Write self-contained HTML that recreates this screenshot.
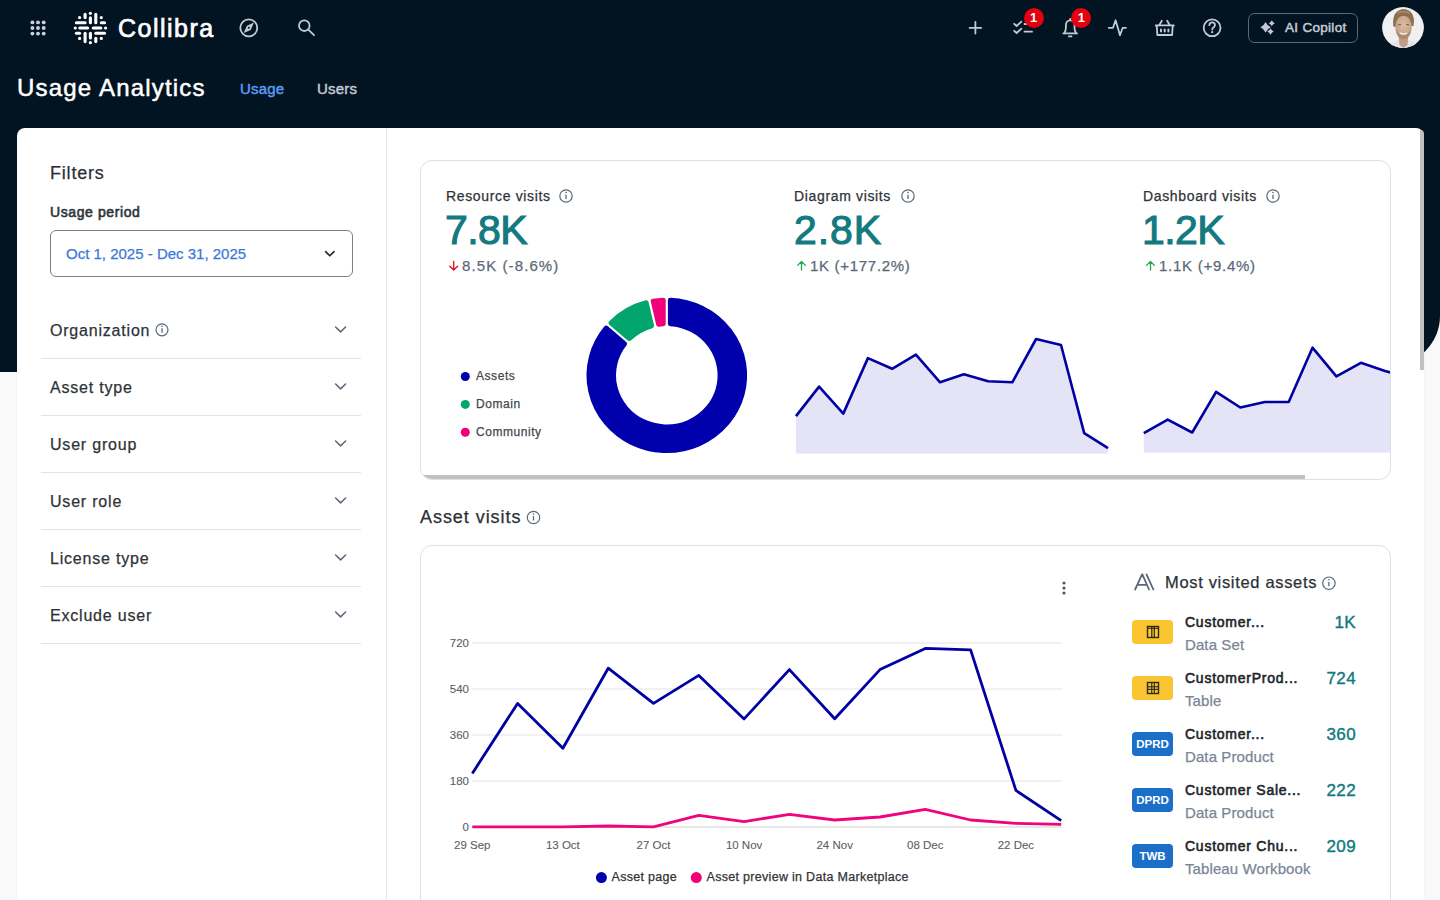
<!DOCTYPE html>
<html><head><meta charset="utf-8">
<style>
*{box-sizing:border-box;margin:0;padding:0}
html,body{width:1440px;height:900px;overflow:hidden;background:#f9f9f9;font-family:"Liberation Sans",sans-serif;color:#2b3036}
.abs{position:absolute}
.t{position:absolute;white-space:nowrap;line-height:1;-webkit-text-stroke-width:0.25px}
#dark{position:absolute;left:0;top:0;width:1424px;height:372px;background:#021422}
#dark2{position:absolute;left:1360px;top:0;width:80px;height:365px;background:#021422;border-bottom-right-radius:49px}
#panel{position:absolute;left:16.5px;top:128px;width:1407.5px;height:800px;background:#fff;border-radius:8px 8px 0 0;box-shadow:0 0 2px rgba(0,0,0,0.07)}
.ico{stroke:#c3cad3;fill:none;stroke-width:1.8;stroke-linecap:round;stroke-linejoin:round}
.badge{position:absolute;width:20px;height:20px;border-radius:50%;background:#e3000f;color:#fff;font-weight:bold;-webkit-text-stroke-width:0;font-size:13px;line-height:20px;text-align:center}
</style></head><body>
<div id="dark"></div><div id="dark2"></div>
<!-- top nav -->
<svg class="abs" style="left:0;top:0" width="1440" height="60">
  <g fill="#c8d1db"><circle cx="32.4" cy="22.4" r="1.95"/><circle cx="38.0" cy="22.4" r="1.95"/><circle cx="43.7" cy="22.4" r="1.95"/><circle cx="32.4" cy="28.0" r="1.95"/><circle cx="38.0" cy="28.0" r="1.95"/><circle cx="43.7" cy="28.0" r="1.95"/><circle cx="32.4" cy="33.6" r="1.95"/><circle cx="38.0" cy="33.6" r="1.95"/><circle cx="43.7" cy="33.6" r="1.95"/></g>
  <!-- logo -->
  <g transform="translate(70,8)" fill="#fff" stroke="#fff" stroke-width="3.1" stroke-linecap="round">
    <g stroke="none">
      <circle cx="20.4" cy="5.3" r="1.6"/><circle cx="9.6" cy="9.6" r="1.6"/><circle cx="31.3" cy="9.6" r="1.6"/>
      <circle cx="5.3" cy="20" r="1.6"/><circle cx="35.6" cy="20" r="1.6"/>
      <circle cx="9.6" cy="30.4" r="1.6"/><circle cx="31.3" cy="30.4" r="1.6"/><circle cx="20.4" cy="34.7" r="1.6"/>
    </g>
    <line x1="15.1" y1="6.4" x2="15.1" y2="9.6"/>
    <line x1="20.4" y1="9.8" x2="20.4" y2="14.7"/>
    <line x1="25.8" y1="6.4" x2="25.8" y2="14.7"/>
    <line x1="15.1" y1="25.3" x2="15.1" y2="33.6"/>
    <line x1="20.4" y1="25.3" x2="20.4" y2="30"/>
    <line x1="25.8" y1="30.4" x2="25.8" y2="33.6"/>
    <line x1="6.4" y1="14.7" x2="15.1" y2="14.7"/>
    <line x1="31.3" y1="14.7" x2="34.5" y2="14.7"/>
    <line x1="9.8" y1="20" x2="17.6" y2="20"/>
    <line x1="23.3" y1="20" x2="30.9" y2="20"/>
    <line x1="6.4" y1="25.3" x2="9.6" y2="25.3"/>
    <line x1="25.8" y1="25.3" x2="34.5" y2="25.3"/>
  </g>
  <!-- compass -->
  <g class="ico"><circle cx="248.8" cy="27.8" r="8.5"/></g>
  <path d="M254 22.6 L250.7 29.9 L243.6 33 L246.9 25.7 Z" fill="#c3cad3"/>
  <circle cx="248.8" cy="27.8" r="1" fill="#021422"/>
  <!-- search -->
  <g class="ico" stroke-width="2"><circle cx="304.3" cy="25.7" r="5.3"/><line x1="308.3" y1="29.7" x2="314" y2="35.2"/></g>
  <!-- plus -->
  <g class="ico"><line x1="969.6" y1="27.8" x2="981.2" y2="27.8"/><line x1="975.4" y1="22" x2="975.4" y2="33.6"/></g>
  <!-- checklist -->
  <g class="ico"><path d="M1014.2 23.8 L1016.6 26 L1021.4 21.6"/><path d="M1014.2 30.8 L1016.6 33 L1021.4 28.6"/><line x1="1024.5" y1="24" x2="1032" y2="24"/><line x1="1024.5" y1="31.7" x2="1032" y2="31.7"/></g>
  <!-- bell -->
  <g class="ico"><path d="M1064.3 33.2 C1065.6 31.6 1065.9 30 1065.9 27.6 L1065.9 25.2 C1065.9 22.3 1067.8 20.4 1070.2 20.4 C1072.6 20.4 1074.5 22.3 1074.5 25.2 L1074.5 27.6 C1074.5 30 1074.8 31.6 1076.1 33.2"/><line x1="1063.4" y1="33.4" x2="1077" y2="33.4"/><line x1="1068.9" y1="36.4" x2="1071.5" y2="36.4"/><line x1="1070.2" y1="18.8" x2="1070.2" y2="20"/></g>
  <!-- activity -->
  <g class="ico"><path d="M1108.8 27.8 L1113 27.8 L1115.6 20.3 L1120 35.3 L1122.7 27.8 L1126 27.8"/></g>
  <!-- basket -->
  <g class="ico"><path d="M1161.8 20.8 L1159.3 25.3 M1167.2 20.8 L1169.7 25.3"/><path d="M1155.8 25.4 L1173.8 25.4 L1172.6 27 L1172.1 35 L1157.3 35 L1156.9 27 Z"/><path d="M1161 29.4 L1161 31.6 M1164.7 29.4 L1164.7 31.6 M1168.4 29.4 L1168.4 31.6" stroke-width="2"/></g>
  <!-- help -->
  <g class="ico"><circle cx="1212.1" cy="27.8" r="8.4"/><path d="M1209.4 25.2 C1209.4 23.5 1210.6 22.4 1212.2 22.4 C1213.8 22.4 1215 23.5 1215 25.1 C1215 27.2 1212.2 27.4 1212.2 29.6"/></g>
  <circle cx="1212.2" cy="32.2" r="1.1" fill="#c3cad3"/>
  <!-- copilot -->
  <rect x="1248.5" y="13.5" width="109" height="29" rx="6" fill="none" stroke="#5f6975" stroke-width="1"/>
  <g fill="#c3cad3"><path d="M1265.60 22.00 Q1267.16 25.64 1270.80 27.20 Q1267.16 28.76 1265.60 32.40 Q1264.04 28.76 1260.40 27.20 Q1264.04 25.64 1265.60 22.00Z"/><path d="M1271.80 20.30 Q1272.70 22.40 1274.80 23.30 Q1272.70 24.20 1271.80 26.30 Q1270.90 24.20 1268.80 23.30 Q1270.90 22.40 1271.80 20.30Z"/><path d="M1270.50 28.30 Q1271.49 30.61 1273.80 31.60 Q1271.49 32.59 1270.50 34.90 Q1269.51 32.59 1267.20 31.60 Q1269.51 30.61 1270.50 28.30Z"/></g>
</svg>
<div class="t" style="left:118px;top:16px;font-size:25px;letter-spacing:1.5px;color:#fff;-webkit-text-stroke-width:0.7px">Collibra</div>
<div class="badge" style="left:1023.7px;top:8.1px">1</div>
<div class="badge" style="left:1071.4px;top:8.1px">1</div>
<div class="t" style="left:1285px;top:21px;font-size:13.5px;letter-spacing:0.3px;color:#c3cad3;-webkit-text-stroke-width:0.5px">AI Copilot</div>
<!-- avatar -->
<svg class="abs" style="left:1382px;top:7px" width="42" height="41" viewBox="0 0 42 41">
  <defs>
    <clipPath id="av"><ellipse cx="21" cy="20.5" rx="20.9" ry="20.4"/></clipPath>
    <radialGradient id="fg" cx="0.5" cy="0.4" r="0.6"><stop offset="0" stop-color="#dcbca6"/><stop offset="1" stop-color="#c29c80"/></radialGradient>
  </defs>
  <g clip-path="url(#av)">
    <rect width="42" height="42" fill="#f0f0f0"/>
    <path d="M4 42 Q8 35 16 33 L27 33 Q35 35 39 42Z" fill="#e2e4ea"/>
    <path d="M16.5 28 L26.5 28 L25.5 38 L21.5 41 L17.5 38Z" fill="#c39c82"/>
    <path d="M11.8 20 Q9.8 3.5 21.2 2.2 Q33 2.6 31.6 19 L28 19 L15 19Z" fill="#8d6e50"/>
    <ellipse cx="21.5" cy="20" rx="8.2" ry="11.2" fill="url(#fg)"/>
    <path d="M13.5 21.5 Q14.2 31.5 21.5 32.6 Q28.8 31.5 29.5 21.5 Q27.5 28 21.5 28 Q15.5 28 13.5 21.5Z" fill="#a8866c" opacity="0.85"/>
    <path d="M17.8 25.8 Q21.5 28.2 25.2 25.8" stroke="#f3ebe6" stroke-width="1.4" fill="none"/>
    <path d="M11.5 19 Q9.5 4 21 2.2 Q33 2.5 31.8 17.5 Q30.5 9.5 26.5 9 Q21 8 16 9.5 Q13 12 13.4 19.5Z" fill="#8d6e50"/>
    <path d="M15 6 Q21 3.5 28 6" stroke="#a9896a" stroke-width="1.5" fill="none"/>
    <path d="M15.8 17.8 L19 17.5 M24 17.5 L27.2 17.8" stroke="#7b5f48" stroke-width="1" fill="none"/>
  </g>
</svg>
<!-- page title -->
<div class="t" style="left:17px;top:76px;font-size:24px;letter-spacing:1.2px;color:#fff;-webkit-text-stroke:0.5px #fff">Usage Analytics</div>
<div class="t" style="left:240px;top:81px;font-size:15px;letter-spacing:0.2px;color:#5b9cf2;-webkit-text-stroke:0.45px #5b9cf2">Usage</div>
<div class="t" style="left:317px;top:81px;font-size:15px;letter-spacing:0.2px;color:#c3cad3;-webkit-text-stroke:0.45px #c3cad3">Users</div>

<div id="panel"></div>

<!-- sidebar -->
<div class="abs" style="left:386px;top:128px;width:1px;height:772px;background:#e3e6ea"></div>
<div class="t" style="left:50px;top:164px;font-size:18px;letter-spacing:0.8px;color:#2b3036">Filters</div>
<div class="t" style="left:50px;top:205px;font-size:14px;letter-spacing:0.6px;color:#2f343a;-webkit-text-stroke-width:0.6px">Usage period</div>
<div class="abs" style="left:49.5px;top:230px;width:303px;height:47px;border:1px solid #75808d;border-radius:6px"></div>
<div class="t" style="left:66px;top:245.5px;font-size:15px;color:#3a78d8">Oct 1, 2025 - Dec 31, 2025</div>
<svg class="abs" style="left:0;top:0" width="386" height="900">
  <path d="M325.6 251.6 L329.8 255.8 L334 251.6" fill="none" stroke="#1f2429" stroke-width="1.6" stroke-linecap="round" stroke-linejoin="round"/>
  <g fill="none" stroke="#5d6b79" stroke-width="1.6" stroke-linecap="round" stroke-linejoin="round">
    <path d="M335.6 327.0 L340.6 331.8 L345.6 327.0"/>
    <path d="M335.6 384.0 L340.6 388.8 L345.6 384.0"/>
    <path d="M335.6 441.0 L340.6 445.8 L345.6 441.0"/>
    <path d="M335.6 498.0 L340.6 502.8 L345.6 498.0"/>
    <path d="M335.6 555.0 L340.6 559.8 L345.6 555.0"/>
    <path d="M335.6 612.0 L340.6 616.8 L345.6 612.0"/>
  </g>
  <g fill="#e1e4e8">
    <rect x="41" y="358" width="320" height="1"/>
    <rect x="41" y="415" width="320" height="1"/>
    <rect x="41" y="472" width="320" height="1"/>
    <rect x="41" y="529" width="320" height="1"/>
    <rect x="41" y="586" width="320" height="1"/>
    <rect x="41" y="643" width="320" height="1"/>
  </g>
  <g fill="none" stroke="#5b6878" stroke-width="1.2"><circle cx="162" cy="329.8" r="6"/></g>
  <g fill="#5b6878"><rect x="161.4" y="328.3" width="1.3" height="4.4"/><circle cx="162" cy="326.3" r="0.8"/></g>
</svg>
<div class="t" style="left:50px;top:323.0px;font-size:16px;letter-spacing:0.8px;color:#2e3339">Organization</div>
<div class="t" style="left:50px;top:380.0px;font-size:16px;letter-spacing:0.8px;color:#2e3339">Asset type</div>
<div class="t" style="left:50px;top:437.0px;font-size:16px;letter-spacing:0.8px;color:#2e3339">User group</div>
<div class="t" style="left:50px;top:494.0px;font-size:16px;letter-spacing:0.8px;color:#2e3339">User role</div>
<div class="t" style="left:50px;top:551.0px;font-size:16px;letter-spacing:0.8px;color:#2e3339">License type</div>
<div class="t" style="left:50px;top:608.0px;font-size:16px;letter-spacing:0.8px;color:#2e3339">Exclude user</div>

<!-- KPI card -->
<div class="abs" style="left:420px;top:160px;width:971px;height:320px;border:1px solid #dde1e6;border-radius:12px;overflow:hidden;background:#fff">
  <div class="abs" style="left:0;top:314px;width:884px;height:4px;background:#c1c1c1"></div>
</div>
<svg class="abs" style="left:0;top:0" width="1440" height="900">
  <defs><clipPath id="kc"><rect x="421" y="161" width="969" height="318" rx="11"/></clipPath></defs>
  <g clip-path="url(#kc)">
  <g transform="translate(666.8 375.3) scale(1 0.968)"><path d="M3.60 -77.72 A77.80 77.80 0 1 1 -60.59 -48.80 L-42.21 -32.54 A53.30 53.30 0 1 0 3.60 -53.18 Z" fill="#0000ad" stroke="#0000ad" stroke-width="5.0" stroke-linejoin="round"/><path d="M-55.82 -54.19 A77.80 77.80 0 0 1 -20.60 -75.02 L-15.20 -51.09 A53.30 53.30 0 0 0 -37.44 -37.93 Z" fill="#03a56f" stroke="#03a56f" stroke-width="5.0" stroke-linejoin="round"/><path d="M-13.58 -76.61 A77.80 77.80 0 0 1 -3.60 -77.72 L-3.60 -53.18 A53.30 53.30 0 0 0 -8.18 -52.67 Z" fill="#f2007a" stroke="#f2007a" stroke-width="5.0" stroke-linejoin="round"/></g>
  <path d="M796.0 416.1 L819.1 386.6 L843.3 413.6 L867.9 358.1 L892.1 368.8 L915.9 354.6 L940.1 382.3 L963.9 374.2 L988.1 381.3 L1012.3 382.3 L1036.1 339.0 L1061.0 345.0 L1084.2 433.2 L1108.0 448.2 L1108.0 453.5 L796.0 453.5 Z" fill="#e5e3f6"/><path d="M796.0 416.1 L819.1 386.6 L843.3 413.6 L867.9 358.1 L892.1 368.8 L915.9 354.6 L940.1 382.3 L963.9 374.2 L988.1 381.3 L1012.3 382.3 L1036.1 339.0 L1061.0 345.0 L1084.2 433.2 L1108.0 448.2" fill="none" stroke="#0000a3" stroke-width="2.6" stroke-linejoin="round"/>
  <path d="M1143.8 433.2 L1167.7 419.6 L1192.2 432.5 L1216.1 391.8 L1240.3 407.5 L1264.8 402.0 L1288.7 402.0 L1312.5 347.7 L1336.4 376.3 L1360.9 362.8 L1385.0 371.0 L1409.0 378.0 L1409.0 452.5 L1143.8 452.5 Z" fill="#e5e3f6"/><path d="M1143.8 433.2 L1167.7 419.6 L1192.2 432.5 L1216.1 391.8 L1240.3 407.5 L1264.8 402.0 L1288.7 402.0 L1312.5 347.7 L1336.4 376.3 L1360.9 362.8 L1385.0 371.0 L1409.0 378.0" fill="none" stroke="#0000a3" stroke-width="2.6" stroke-linejoin="round"/>
  </g>
  <circle cx="566.0" cy="196.0" r="6.2" fill="none" stroke="#5b6878" stroke-width="1.2"/><rect x="565.35" y="194.7" width="1.3" height="4.3" fill="#5b6878"/><circle cx="566.0" cy="192.6" r="0.8" fill="#5b6878"/> <circle cx="908.0" cy="196.0" r="6.2" fill="none" stroke="#5b6878" stroke-width="1.2"/><rect x="907.35" y="194.7" width="1.3" height="4.3" fill="#5b6878"/><circle cx="908.0" cy="192.6" r="0.8" fill="#5b6878"/> <circle cx="1273.0" cy="196.0" r="6.2" fill="none" stroke="#5b6878" stroke-width="1.2"/><rect x="1272.35" y="194.7" width="1.3" height="4.3" fill="#5b6878"/><circle cx="1273.0" cy="192.6" r="0.8" fill="#5b6878"/>
  <circle cx="465.3" cy="376.5" r="4.5" fill="#0000ad"/>
  <circle cx="465.3" cy="404.4" r="4.5" fill="#03a56f"/>
  <circle cx="465.3" cy="432.2" r="4.5" fill="#f2007a"/>
  <path d="M453.7 261.5 L453.7 270 M449.8 266.2 L453.7 270.1 L457.6 266.2" fill="none" stroke="#e0141e" stroke-width="1.35" stroke-linecap="round" stroke-linejoin="round"/>
  <path d="M801.5 270 L801.5 261.5 M797.6 265.4 L801.5 261.5 L805.4 265.4" fill="none" stroke="#2aa650" stroke-width="1.3" stroke-linecap="round" stroke-linejoin="round"/>
  <path d="M1150.5 270 L1150.5 261.5 M1146.6 265.4 L1150.5 261.5 L1154.4 265.4" fill="none" stroke="#2aa650" stroke-width="1.3" stroke-linecap="round" stroke-linejoin="round"/>
</svg>
<div class="t" style="left:446px;top:188.8px;font-size:14px;letter-spacing:0.65px;color:#2f3338">Resource visits</div>
<div class="t" style="left:794px;top:188.8px;font-size:14px;letter-spacing:0.65px;color:#2f3338">Diagram visits</div>
<div class="t" style="left:1143px;top:188.8px;font-size:14px;letter-spacing:0.65px;color:#2f3338">Dashboard visits</div>
<div class="t" style="left:445px;top:209.5px;font-size:41px;letter-spacing:-0.6px;color:#137a80;-webkit-text-stroke:1.1px #137a80">7.8K</div>
<div class="t" style="left:794px;top:209.5px;font-size:41px;letter-spacing:0.9px;color:#137a80;-webkit-text-stroke:1.1px #137a80">2.8K</div>
<div class="t" style="left:1142px;top:209.5px;font-size:41px;letter-spacing:-0.6px;color:#137a80;-webkit-text-stroke:1.1px #137a80">1.2K</div>
<div class="t" style="left:462px;top:257.5px;font-size:15px;letter-spacing:1.1px;color:#5c6979">8.5K (-8.6%)</div>
<div class="t" style="left:810px;top:257.5px;font-size:15px;letter-spacing:0.7px;color:#5c6979">1K (+177.2%)</div>
<div class="t" style="left:1159px;top:257.5px;font-size:15px;letter-spacing:0.74px;color:#5c6979">1.1K (+9.4%)</div>
<div class="t" style="left:476px;top:370px;font-size:12px;letter-spacing:0.55px;color:#43484e">Assets</div>
<div class="t" style="left:476px;top:398px;font-size:12px;letter-spacing:0.55px;color:#43484e">Domain</div>
<div class="t" style="left:476px;top:426px;font-size:12px;letter-spacing:0.55px;color:#43484e">Community</div>

<!-- Asset visits -->
<div class="t" style="left:420px;top:508px;font-size:18px;letter-spacing:0.95px;color:#2b3036">Asset visits</div>
<div class="abs" style="left:420px;top:545px;width:971px;height:400px;border:1px solid #dde1e6;border-radius:12px;background:#fff"></div>
<svg class="abs" style="left:0;top:0" width="1440" height="900">
  <circle cx="533.5" cy="517.5" r="6.2" fill="none" stroke="#5b6878" stroke-width="1.2"/><rect x="532.85" y="516.2" width="1.3" height="4.3" fill="#5b6878"/><circle cx="533.5" cy="514.1" r="0.8" fill="#5b6878"/>
  <rect x="472" y="642.5" width="589.5" height="1" fill="#e4e4e4"/><rect x="472" y="688.5" width="589.5" height="1" fill="#e4e4e4"/><rect x="472" y="734.5" width="589.5" height="1" fill="#e4e4e4"/><rect x="472" y="780.5" width="589.5" height="1" fill="#e4e4e4"/><rect x="472" y="826.5" width="589.5" height="1" fill="#cfcfcf"/>
  <path d="M472.3 826.9 L517.6 826.9 L562.9 826.9 L608.2 826.0 L653.5 826.9 L698.8 815.4 L744.1 821.6 L789.4 814.3 L834.7 820.0 L880.0 817.0 L925.3 809.3 L970.6 820.0 L1015.9 823.3 L1061.2 824.4" fill="none" stroke="#ef047d" stroke-width="2.8" stroke-linejoin="round"/>
  <path d="M472.3 773.4 L517.6 703.4 L562.9 748.2 L608.2 668.2 L653.5 703.4 L698.8 675.4 L744.1 718.9 L789.4 669.6 L834.7 718.7 L880.0 669.6 L925.3 648.4 L970.6 649.9 L1015.9 790.4 L1061.2 820.7" fill="none" stroke="#0000a3" stroke-width="2.8" stroke-linejoin="round"/>
  <g fill="#4a5868"><circle cx="1064" cy="583" r="1.6"/><circle cx="1064" cy="588" r="1.6"/><circle cx="1064" cy="593" r="1.6"/></g>
  <circle cx="601.4" cy="877.6" r="5.5" fill="#0000ad"/>
  <circle cx="696.3" cy="877.6" r="5.5" fill="#f2007a"/>
  <circle cx="1328.9" cy="583.2" r="6.2" fill="none" stroke="#5b6878" stroke-width="1.2"/><rect x="1328.25" y="581.9" width="1.3" height="4.3" fill="#5b6878"/><circle cx="1328.9" cy="579.8" r="0.8" fill="#5b6878"/>
</svg>
<div class="t" style="left:420px;width:49px;text-align:right;top:637.5px;font-size:11.5px;color:#606060;-webkit-text-stroke-width:0.1px">720</div><div class="t" style="left:420px;width:49px;text-align:right;top:683.5px;font-size:11.5px;color:#606060;-webkit-text-stroke-width:0.1px">540</div><div class="t" style="left:420px;width:49px;text-align:right;top:729.5px;font-size:11.5px;color:#606060;-webkit-text-stroke-width:0.1px">360</div><div class="t" style="left:420px;width:49px;text-align:right;top:775.5px;font-size:11.5px;color:#606060;-webkit-text-stroke-width:0.1px">180</div><div class="t" style="left:420px;width:49px;text-align:right;top:821.5px;font-size:11.5px;color:#606060;-webkit-text-stroke-width:0.1px">0</div>
<div class="t" style="left:432.3px;width:80px;text-align:center;top:840.3px;font-size:11.5px;color:#606060;-webkit-text-stroke-width:0.1px">29 Sep</div><div class="t" style="left:522.9px;width:80px;text-align:center;top:840.3px;font-size:11.5px;color:#606060;-webkit-text-stroke-width:0.1px">13 Oct</div><div class="t" style="left:613.5px;width:80px;text-align:center;top:840.3px;font-size:11.5px;color:#606060;-webkit-text-stroke-width:0.1px">27 Oct</div><div class="t" style="left:704.1px;width:80px;text-align:center;top:840.3px;font-size:11.5px;color:#606060;-webkit-text-stroke-width:0.1px">10 Nov</div><div class="t" style="left:794.7px;width:80px;text-align:center;top:840.3px;font-size:11.5px;color:#606060;-webkit-text-stroke-width:0.1px">24 Nov</div><div class="t" style="left:885.3px;width:80px;text-align:center;top:840.3px;font-size:11.5px;color:#606060;-webkit-text-stroke-width:0.1px">08 Dec</div><div class="t" style="left:975.9px;width:80px;text-align:center;top:840.3px;font-size:11.5px;color:#606060;-webkit-text-stroke-width:0.1px">22 Dec</div>
<div class="t" style="left:611.5px;top:871px;font-size:12.5px;letter-spacing:0.3px;color:#333">Asset page</div>
<div class="t" style="left:706.5px;top:871px;font-size:12.5px;letter-spacing:0.3px;color:#333">Asset preview in Data Marketplace</div>

<!-- Most visited -->
<svg class="abs" style="left:1120px;top:560px" width="50" height="40">
  <path d="M15.1 29.5 L22.2 14.2 L29 29.5 M18.3 24.9 L26.5 24.9 M26.5 14.4 L33.4 29.5" fill="none" stroke="#5b6878" stroke-width="1.8" stroke-linejoin="round" stroke-linecap="round"/>
</svg>
<div class="t" style="left:1165px;top:574px;font-size:16.5px;letter-spacing:0.67px;color:#2b3036">Most visited assets</div>
<div class="abs" style="left:1132px;top:620px;width:41px;height:24px;border-radius:4px;background:#fbc531"><svg class="abs" style="left:14px;top:5px" width="14" height="14"><rect x="1.5" y="1.5" width="11" height="11" fill="none" stroke="#2a2a1a" stroke-width="1.4"/><rect x="5.2" y="1.5" width="1.2" height="11" fill="#2a2a1a"/><rect x="7.7" y="1.5" width="1.2" height="11" fill="#2a2a1a"/><rect x="1.5" y="2.8" width="11" height="1" fill="#2a2a1a"/></svg></div>
<div class="t" style="left:1185px;top:615.0px;font-size:14px;letter-spacing:0.75px;color:#22272d;-webkit-text-stroke-width:0.6px">Customer...</div>
<div class="t" style="left:1185px;top:637.0px;font-size:15px;letter-spacing:0.1px;color:#7a8696">Data Set</div>
<div class="t" style="left:1256px;width:100px;text-align:right;top:614.0px;font-size:17px;letter-spacing:0.4px;color:#137a80;-webkit-text-stroke-width:0.4px">1K</div>
<div class="abs" style="left:1132px;top:676px;width:41px;height:24px;border-radius:4px;background:#fbc531"><svg class="abs" style="left:14px;top:5px" width="14" height="14"><rect x="1.5" y="1.5" width="11" height="11" fill="none" stroke="#2a2a1a" stroke-width="1.4"/><rect x="5.2" y="1.5" width="1.1" height="11" fill="#2a2a1a"/><rect x="7.8" y="1.5" width="1.1" height="11" fill="#2a2a1a"/><rect x="1.5" y="5.2" width="11" height="1.1" fill="#2a2a1a"/><rect x="1.5" y="7.8" width="11" height="1.1" fill="#2a2a1a"/></svg></div>
<div class="t" style="left:1185px;top:671.0px;font-size:14px;letter-spacing:0.75px;color:#22272d;-webkit-text-stroke-width:0.6px">CustomerProd...</div>
<div class="t" style="left:1185px;top:693.0px;font-size:15px;letter-spacing:0.1px;color:#7a8696">Table</div>
<div class="t" style="left:1256px;width:100px;text-align:right;top:670.0px;font-size:17px;letter-spacing:0.4px;color:#137a80;-webkit-text-stroke-width:0.4px">724</div>
<div class="abs" style="left:1132px;top:732px;width:41px;height:24px;border-radius:4px;background:#1b6fc8"><div class="t" style="left:0;width:41px;text-align:center;top:6.5px;font-size:11.5px;font-weight:bold;-webkit-text-stroke-width:0;color:#fff">DPRD</div></div>
<div class="t" style="left:1185px;top:727.0px;font-size:14px;letter-spacing:0.75px;color:#22272d;-webkit-text-stroke-width:0.6px">Customer...</div>
<div class="t" style="left:1185px;top:749.0px;font-size:15px;letter-spacing:0.1px;color:#7a8696">Data Product</div>
<div class="t" style="left:1256px;width:100px;text-align:right;top:726.0px;font-size:17px;letter-spacing:0.4px;color:#137a80;-webkit-text-stroke-width:0.4px">360</div>
<div class="abs" style="left:1132px;top:788px;width:41px;height:24px;border-radius:4px;background:#1b6fc8"><div class="t" style="left:0;width:41px;text-align:center;top:6.5px;font-size:11.5px;font-weight:bold;-webkit-text-stroke-width:0;color:#fff">DPRD</div></div>
<div class="t" style="left:1185px;top:783.0px;font-size:14px;letter-spacing:0.75px;color:#22272d;-webkit-text-stroke-width:0.6px">Customer Sale...</div>
<div class="t" style="left:1185px;top:805.0px;font-size:15px;letter-spacing:0.1px;color:#7a8696">Data Product</div>
<div class="t" style="left:1256px;width:100px;text-align:right;top:782.0px;font-size:17px;letter-spacing:0.4px;color:#137a80;-webkit-text-stroke-width:0.4px">222</div>
<div class="abs" style="left:1132px;top:844px;width:41px;height:24px;border-radius:4px;background:#1b6fc8"><div class="t" style="left:0;width:41px;text-align:center;top:6.5px;font-size:11.5px;font-weight:bold;-webkit-text-stroke-width:0;color:#fff">TWB</div></div>
<div class="t" style="left:1185px;top:839.0px;font-size:14px;letter-spacing:0.75px;color:#22272d;-webkit-text-stroke-width:0.6px">Customer Chu...</div>
<div class="t" style="left:1185px;top:861.0px;font-size:15px;letter-spacing:0.1px;color:#7a8696">Tableau Workbook</div>
<div class="t" style="left:1256px;width:100px;text-align:right;top:838.0px;font-size:17px;letter-spacing:0.4px;color:#137a80;-webkit-text-stroke-width:0.4px">209</div>
<div class="abs" style="left:1419.5px;top:130px;width:4.5px;height:240px;border-radius:0 4px 0 0;background:#c1c1c1"></div>
</body></html>
